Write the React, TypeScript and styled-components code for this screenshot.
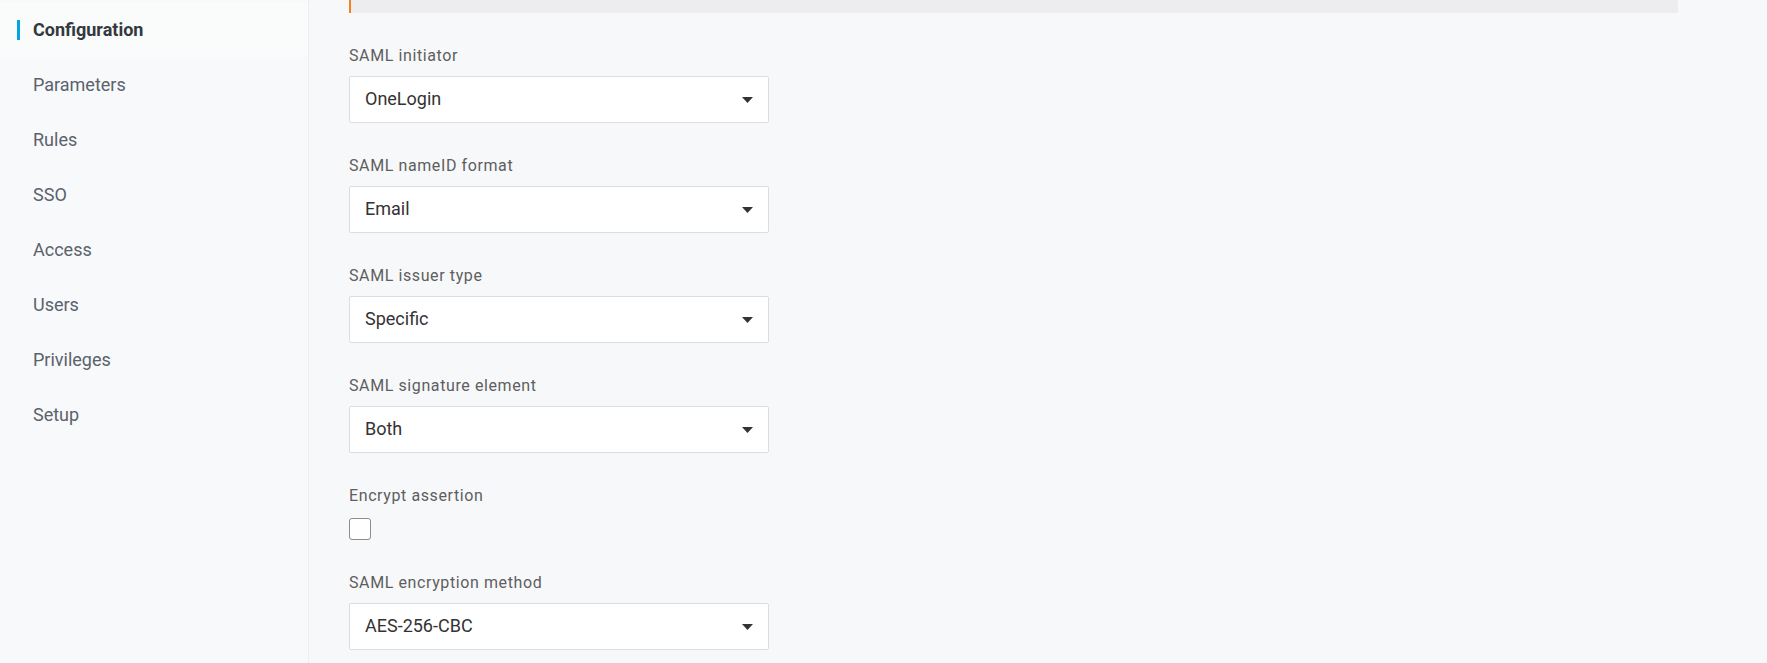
import React, {useState} from 'react';
import styled, {createGlobalStyle} from 'styled-components';

const GlobalStyle = createGlobalStyle`
    html, body {
        margin: 0;
        padding: 0;
        background: #f7f8fa;
        font-family: Roboto, "Liberation Sans", sans-serif;
    }
    * {
        box-sizing: border-box;
    }
`;

const Page = styled.div`
    display: flex;
    min-height: 100vh;
    height: 663px;
    overflow: hidden;
`;

const Sidebar = styled.nav`
    width: 309px;
    flex-shrink: 0;
    background: #f8f9fa;
    border-right: 1px solid #eceef1;
    padding-top: 2px;
`;

const NavItem = styled.a<{ $active?: boolean }>`
    position: relative;
    display: flex;
    align-items: center;
    height: 55px;
    padding-left: 33px;
    font-size: 18px;
    font-weight: ${p => (p.$active ? 700 : 400)};
    color: ${p => (p.$active ? '#333840' : '#5a626d')};
    background: ${p => (p.$active ? '#fafbfb' : 'transparent')};
    text-decoration: none;
    cursor: pointer;

    &::before {
        content: '';
        display: ${p => (p.$active ? 'block' : 'none')};
        position: absolute;
        left: 17px;
        top: 18px;
        width: 3px;
        height: 20px;
        background: #06a3e2;
    }
`;

const Main = styled.main`
    flex: 1;
    padding: 0 89px 0 40px;
`;

const Notice = styled.div`
    height: 13px;
    background: #ededf0;
    border-left: 2px solid #f5821f;
    border-bottom-right-radius: 2px;
    margin-bottom: 33px;
`;

const Field = styled.div`
    margin-bottom: 33px;
`;

const Label = styled.label`
    display: block;
    font-size: 16px;
    line-height: 20px;
    letter-spacing: 0.6px;
    color: #5e5e5e;
    margin-bottom: 10px;
`;

const SelectBox = styled.div`
    position: relative;
    display: flex;
    align-items: center;
    width: 420px;
    height: 47px;
    padding: 0 15px 2px;
    background: #ffffff;
    border: 1px solid #dcdde0;
    border-radius: 2px;
    font-size: 18px;
    color: #333333;
    cursor: pointer;
`;

const Value = styled.span`
    flex: 1;
`;

const Caret = styled.svg`
    width: 11px;
    height: 6px;
    flex-shrink: 0;
    margin-top: 2px;
`;

const Checkbox = styled.span<{ $checked: boolean }>`
    display: block;
    width: 22px;
    height: 22px;
    border: 1.5px solid #8c8c8c;
    border-radius: 3px;
    background: ${p => (p.$checked ? '#06a3e2' : '#ffffff')};
    margin-top: 12px;
    cursor: pointer;
`;

const CheckLabel = styled(Label)`
    margin-bottom: 0;
`;

const navItems = ['Configuration', 'Parameters', 'Rules', 'SSO', 'Access', 'Users', 'Privileges', 'Setup'];

function Select({ value }: { value: string }) {
    return (
        <SelectBox>
            <Value>{value}</Value>
            <Caret viewBox="0 0 11 6">
                <path d="M0 0 L11 0 L5.5 6 Z" fill="#333" />
            </Caret>
        </SelectBox>
    );
}

export default function App() {
    const [encrypt, setEncrypt] = useState(false);

    return (
        <Page>
            <GlobalStyle />
            <Sidebar>
                {navItems.map((item, i) => (
                    <NavItem key={item} $active={i === 0}>{item}</NavItem>
                ))}
            </Sidebar>
            <Main>
                <Notice />
                <Field>
                    <Label>SAML initiator</Label>
                    <Select value="OneLogin" />
                </Field>
                <Field>
                    <Label>SAML nameID format</Label>
                    <Select value="Email" />
                </Field>
                <Field>
                    <Label>SAML issuer type</Label>
                    <Select value="Specific" />
                </Field>
                <Field>
                    <Label>SAML signature element</Label>
                    <Select value="Both" />
                </Field>
                <Field>
                    <CheckLabel>Encrypt assertion</CheckLabel>
                    <Checkbox $checked={encrypt} onClick={() => setEncrypt(!encrypt)} />
                </Field>
                <Field>
                    <Label>SAML encryption method</Label>
                    <Select value="AES-256-CBC" />
                </Field>
            </Main>
        </Page>
    );
}
